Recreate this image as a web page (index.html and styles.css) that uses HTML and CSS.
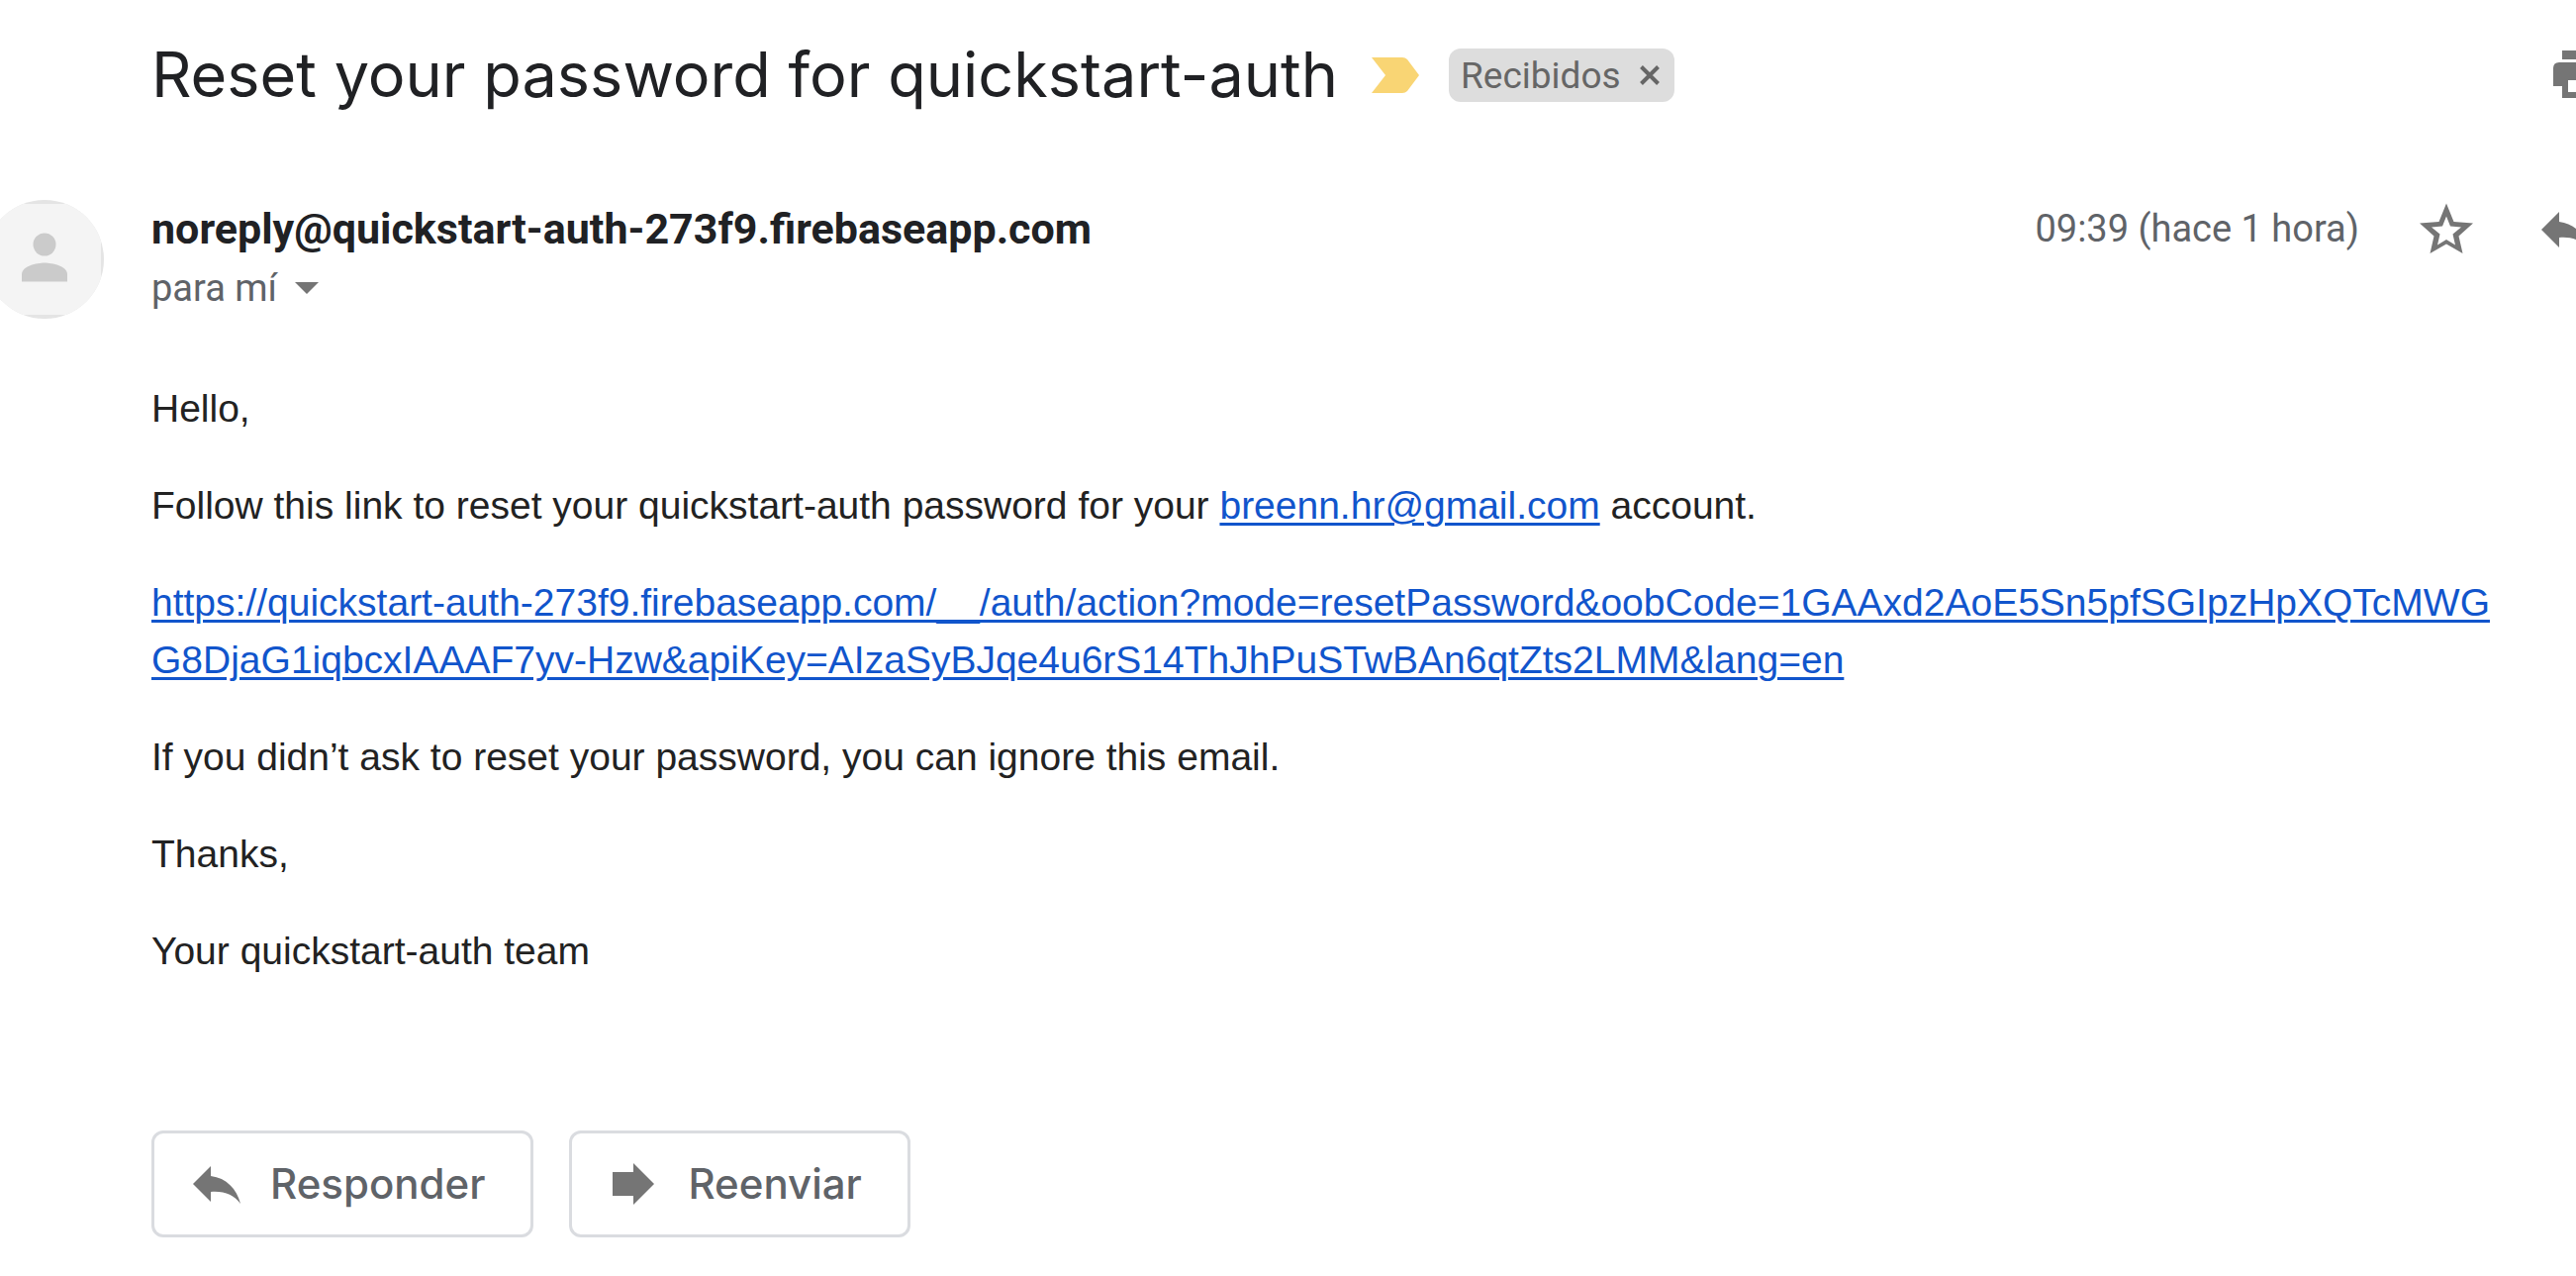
FILE: index.html
```html
<!DOCTYPE html>
<html lang="es">
<head>
<meta charset="utf-8">
<meta name="viewport" content="width=device-width, initial-scale=1">
<title>Reset your password for quickstart-auth</title>
<link rel="stylesheet" href="styles.css">
</head>
<body>
<main class="mail">
  <header class="subject">
    <h1 class="subject__title">Reset your password for quickstart-auth</h1>
    <button class="icon-button" type="button" aria-label="Importante">
      <svg width="48" height="36" viewBox="0 0 48 36"><path fill="#f9d574" d="M0 0H31Q34 0 36 2L48 18 36 34Q34 36 31 36H0L14 18Z"/></svg>
    </button>
    <span class="tag">Recibidos
      <button class="icon-button" type="button" aria-label="Quitar etiqueta">
        <svg width="20" height="20" viewBox="0 0 20 20"><path stroke="#666" stroke-width="4" d="M1.500 1.500 18.500 18.500M18.500 1.500 1.500 18.500"/></svg>
      </button>
    </span>
    <button class="icon-button subject__print" type="button" aria-label="Imprimir">
      <svg width="64" height="64" viewBox="0 0 64 64"><path fill="#757575" fill-rule="evenodd" d="M15 7H49V16H15ZM12 19H52Q58 19 58 25V43H49V55H15V43H6V25Q6 19 12 19ZM21 37V49H43V37Z"/></svg>
    </button>
  </header>

  <section class="sender">
    <svg class="sender__avatar" width="120" height="120" viewBox="0 0 120 120" aria-hidden="true">
      <clipPath id="disc"><circle cx="60" cy="60" r="60"/></clipPath>
      <g clip-path="url(#disc)">
        <path fill="#e4e4e4" d="M0 0H120V120H0Z"/>
        <path fill="#f4f4f4" d="M3 4H117V116H3Z"/>
      </g>
      <circle cx="60" cy="45" r="11.500" fill="#cbcbcb"/>
      <path fill="#cbcbcb" d="M37 82.500V75C37 67 52 63.500 60 63.500S83 67 83 75V82.500Z"/>
    </svg>
    <div class="sender__who">
      <div class="sender__address">noreply@quickstart-auth-273f9.firebaseapp.com</div>
      <button class="sender__to" type="button">para mí
        <svg width="24" height="12" viewBox="0 0 24 12" aria-hidden="true"><path fill="#757575" d="M0 0H24L12 12Z"/></svg>
      </button>
    </div>
    <div class="sender__actions">
      <time datetime="09:39">09:39 (hace 1 hora)</time>
      <button class="icon-button" type="button" aria-label="Destacar">
        <svg width="64" height="64" viewBox="0 0 64 64"><path fill="#757575" fill-rule="evenodd" d="M32 6.500 39.500 25 59 26.500 44.500 39.500 48.500 57 32 47.500 15.500 57 19.500 39.500 5 26.500 24.500 25ZM32 19.500 28 29.500 17 30.500 25.500 37.500 23 48.500 32 43 41 48.500 38.500 37.500 47 30.500 36 29.500Z"/></svg>
      </button>
      <button class="icon-button" type="button" aria-label="Responder">
        <svg width="64" height="64" viewBox="0 0 64 64"><path fill="#757575" d="M8 33 26 15V25C42 27 52 38 56 53 49 44 40 40 26 41V51Z"/></svg>
      </button>
    </div>
  </section>

  <article class="message">
    <p>Hello,</p>
    <p>Follow this link to reset your quickstart-auth password for your <a href="mailto:breenn.hr@gmail.com">breenn.hr@gmail.com</a> account.</p>
    <p><a class="message__url" href="https://quickstart-auth-273f9.firebaseapp.com/__/auth/action?mode=resetPassword&amp;oobCode=1GAAxd2AoE5Sn5pfSGIpzHpXQTcMWGG8DjaG1iqbcxIAAAF7yv-Hzw&amp;apiKey=AIzaSyBJqe4u6rS14ThJhPuSTwBAn6qtZts2LMM&amp;lang=en">https://quickstart-auth-273f9.firebaseapp.com/__/auth/action?mode=resetPassword&amp;oobCode=1GAAxd2AoE5Sn5pfSGIpzHpXQTcMWGG8DjaG1iqbcxIAAAF7yv-Hzw&amp;apiKey=AIzaSyBJqe4u6rS14ThJhPuSTwBAn6qtZts2LMM&amp;lang=en</a></p>
    <p>If you didn’t ask to reset your password, you can ignore this email.</p>
    <p>Thanks,</p>
    <p>Your quickstart-auth team</p>
  </article>

  <footer class="replies">
    <button class="reply-button" type="button">
      <svg width="48" height="42" viewBox="0 0 48 42" aria-hidden="true"><path fill="#757575" d="M0 21 18 3V13C34 15 44 26 48 41 41 32 32 28 18 29V39Z"/></svg>
      Responder
    </button>
    <button class="reply-button" type="button">
      <svg width="48" height="42" viewBox="0 0 48 42" aria-hidden="true"><path fill="#757575" d="M2 9H23V0L44 21 23 42V33H2Z"/></svg>
      Reenviar
    </button>
  </footer>
</main>
</body>
</html>
```
FILE: styles.css
```css
* {
  box-sizing: border-box;
}

body {
  margin: 0;
  overflow-x: hidden;
  background: #fff;
  color: #202124;
  font-family: Roboto, "Liberation Sans", sans-serif;
}

button {
  margin: 0;
  padding: 0;
  border: 0;
  background: none;
  color: inherit;
  font: inherit;
  cursor: pointer;
}

svg {
  display: block;
  flex: none;
}

.mail {
  padding: 36px 0 39px 153px;
}

.icon-button {
  flex: none;
}

/* Subject line */
.subject {
  display: flex;
  align-items: center;
  margin-right: -35px;
}

.subject__title {
  margin: 0 34px 0 0;
  padding-bottom: 2px;
  font: 400 63px/78px Inter, "Liberation Sans", sans-serif;
}

.subject__print {
  margin-left: auto;
}

.tag {
  display: flex;
  align-items: center;
  gap: 19px;
  height: 54px;
  margin-left: 30px;
  padding: 0 15px 0 12px;
  border-radius: 12px;
  background: #ddd;
  color: #666;
  font-size: 37px;
}

/* Sender row; the avatar hangs in the left margin */
.sender {
  display: flex;
  margin: 86px -21px 0 -168px;
}

.sender__avatar {
  margin-right: 48px;
}

.sender__who {
  flex: 1;
}

.sender__address {
  font-size: 43px;
  font-weight: 700;
  line-height: 58px;
}

.sender__to {
  display: flex;
  align-items: center;
  gap: 18px;
  color: #5f6368;
  font-size: 38px;
  line-height: 62px;
}

.sender__actions {
  display: flex;
  align-items: center;
  gap: 56px;
  height: 58px;
  color: #5f6368;
  font-size: 38px;
}

/* Message text */
.message {
  display: grid;
  gap: 40px;
  padding: 62px 70px 0 0;
  color: #222;
  font: 39px/58px "Liberation Sans", Arial, sans-serif;
}

.message p {
  margin: 0;
}

.message a {
  color: #15c;
  text-decoration-thickness: 3px;
  text-underline-offset: 4px;
}

.message__url {
  word-break: break-all;
}

/* Reply buttons */
.replies {
  display: flex;
  gap: 36px;
  margin-top: 152px;
}

.reply-button {
  display: flex;
  align-items: center;
  gap: 30px;
  height: 108px;
  padding: 0 46px 0 39px;
  border: 3px solid #dadce0;
  border-radius: 12px;
  color: #5f6368;
  font: 500 42px/60px Inter, "Liberation Sans", sans-serif;
}
```
